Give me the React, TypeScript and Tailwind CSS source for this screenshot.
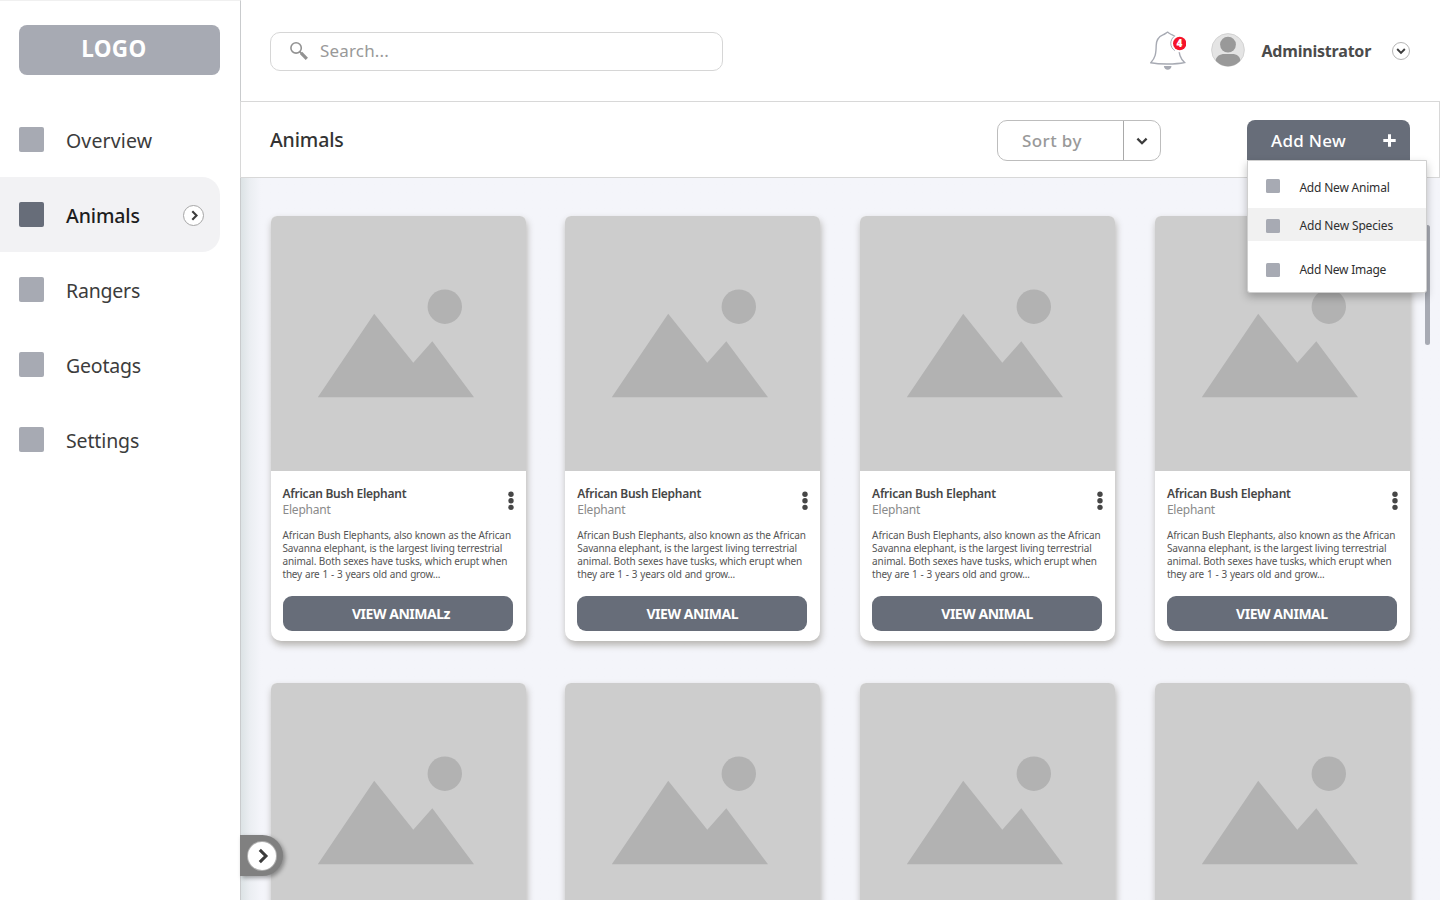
import React from "react";

const NAV = [
  { label: "Overview", tracking: "tracking-[0.13px]" },
  { label: "Animals", tracking: "tracking-[-0.12px]" },
  { label: "Rangers", tracking: "tracking-[-0.2px]" },
  { label: "Geotags", tracking: "tracking-[-0.2px]" },
  { label: "Settings", tracking: "tracking-[-0.13px]" },
];

const DESCRIPTION = [
  { text: "African Bush Elephants, also known as the African", tracking: "tracking-[-0.1px]" },
  { text: "Savanna elephant, is the largest living terrestrial", tracking: "tracking-[-0.13px]" },
  { text: "animal. Both sexes have tusks, which erupt when", tracking: "tracking-[-0.11px]" },
  { text: "they are 1 - 3 years old and grow...", tracking: "tracking-[-0.21px] [word-spacing:0.6px]" },
];

function Chevron({ className }: { className: string }) {
  return (
    <svg viewBox="0 0 12 12" className={className} fill="none" stroke="currentColor" strokeWidth="2.3">
      <path d="M1.4 3.6 6 8.2 10.6 3.6" />
    </svg>
  );
}

function Sidebar() {
  return (
    <aside className="z-10 flex h-full w-[241px] shrink-0 flex-col border-t border-r border-t-[#f0f0f0] border-r-[#c9cbcd] bg-white">
      <div className="mt-6 ml-[19.4px] flex h-[50px] w-[201px] items-center justify-center rounded-lg bg-[#a7aab3] pr-3 pb-0.5 text-[22.5px] font-bold tracking-[0.3px] text-white">
        LOGO
      </div>
      <nav className="mt-[27px] flex flex-col">
        {NAV.map(({ label, tracking }) => {
          const active = label === "Animals";
          return (
            <div
              key={label}
              className={`flex h-[75px] w-[220px] items-center rounded-r-[18px] pl-[19.4px] ${active ? "bg-[#f2f2f4]" : ""}`}
            >
              <span className={`size-[25px] rounded-[2px] ${active ? "bg-[#676d79]" : "bg-[#a7aab3]"}`} />
              <span
                className={`ml-[21.6px] pt-0.5 text-[19.5px] ${tracking} ${active ? "font-medium text-[#1d1d1d]" : "text-[#3c3c3c]"}`}
              >
                {label}
              </span>
              {active && (
                <span className="mt-px mr-4 ml-auto flex size-[21px] items-center justify-center rounded-full border border-[#a6a6a6] bg-white text-[#3c3c3c]">
                  <Chevron className="ml-px size-[11px] -rotate-90" />
                </span>
              )}
            </div>
          );
        })}
      </nav>
    </aside>
  );
}

function Header() {
  return (
    <header className="flex h-[101px] shrink-0 items-center pl-[28.600px]">
      <div className="mt-px flex h-[39px] w-[453px] items-center rounded-[10px] border border-[#d6d6d6] pb-px pl-[18.400px]">
        <svg viewBox="0 0 20 20" className="size-5 text-[#929292]" fill="none" stroke="currentColor">
          <circle cx="7.100" cy="6.9" r="5.200" strokeWidth="1.600" />
          <path d="m10.700 10.600 2 2" strokeWidth="1.800" />
          <path d="m12 11.900 5.800 6" strokeWidth="3.200" />
        </svg>
        <span className="ml-[11px] text-[17px] tracking-[0.18px] text-[#999]">Search...</span>
      </div>
      <div className="relative ml-[427.400px] flex">
        <svg viewBox="0 0 36 40" className="h-10 w-9" fill="none">
          <path
            d="M17.5 1.200c-1.400.8-2.800 2-4.600 2.700C8.500 5.800 6.300 9.500 6.200 14.500c-.2 8.500-.8 12-5.400 17.300 9 1.700 24.500 1.700 33.800-.3-4.600-4.500-5.600-8-5.700-17C28.800 9.200 26.500 5.700 22.300 3.900 20.400 3.100 18.900 2 17.500 1.200Z"
            stroke="#a7aab3"
            strokeWidth="1.4"
          />
          <circle cx="29.700" cy="12.500" r="8.700" fill="#fff" />
          <path d="M24 5.600a8.600 8.600 0 0 0 .8 14" stroke="#a7aab3" strokeWidth="1" />
          <circle cx="29.700" cy="12.500" r="6.700" fill="#f5142b" />
          <path d="M13.900 35h7.600c-.4 2.600-1.600 3.700-3.800 3.700S14.300 37.500 13.900 35Z" fill="#a7aab3" />
        </svg>
        <span className="absolute top-[6px] left-[23px] flex size-[13px] items-center justify-center text-[10px] leading-none font-black text-white">
          4
        </span>
      </div>
      <svg viewBox="0 0 34 34" className="-mt-0.5 ml-[25.500px] size-[34px]">
        <clipPath id="avatar">
          <circle cx="17" cy="17" r="16.2" />
        </clipPath>
        <circle cx="17" cy="17" r="16.400" fill="#e4e4e4" stroke="#cbcbcb" strokeWidth=".8" />
        <g clipPath="url(#avatar)" fill="#999">
          <circle cx="17" cy="11.600" r="7.900" />
          <path d="M4.500 34V29c0-5.800 4.500-8 9-8h7.500c5 0 8.500 2.500 8.500 8v5Z" />
        </g>
      </svg>
      <span className="ml-4 w-[110px] text-[16px] font-bold tracking-[-0.2px] whitespace-nowrap text-[#4b4b4b]">Administrator</span>
      <span className="ml-[20.500px] flex size-[18px] items-center justify-center rounded-full border border-[#b5b5b5] text-[#3c3c3c]">
        <Chevron className="size-[10px]" />
      </span>
    </header>
  );
}

function AddMenu() {
  return (
    <div className="absolute top-10 left-0 flex h-[133px] w-[180px] flex-col rounded-b-[3px] border border-[#cfcfcf] bg-white text-[12px] text-[#2f2f2f] shadow-[0_4px_8px_rgba(0,0,0,0.25)]">
      <div className="flex h-[47px] items-center pt-1 pl-[18.400px]">
        <span className="size-[14px] rounded-[1.5px] bg-[#a7aab3]" />
        <span className="ml-[19px] pt-[3px] tracking-[-0.2px]">Add New Animal</span>
      </div>
      <div className="flex h-[33px] items-center bg-[#f1f1f1] pt-[3px] pl-[18.400px]">
        <span className="size-[14px] rounded-[1.5px] bg-[#a7aab3]" />
        <span className="ml-[19px] pt-px tracking-[-0.15px]">Add New Species</span>
      </div>
      <div className="flex h-[51px] items-center pt-[7px] pl-[18.400px]">
        <span className="size-[14px] rounded-[1.5px] bg-[#a7aab3]" />
        <span className="ml-[19px] tracking-[-0.25px]">Add New Image</span>
      </div>
    </div>
  );
}

function Toolbar() {
  return (
    <div className="relative z-20 -ml-px flex h-[77px] shrink-0 items-center border border-[#d8d8d8] bg-white pl-[29px]">
      <h1 className="w-[727px] pt-px text-[19.500px] font-medium tracking-[-0.15px] text-[#333]">Animals</h1>
      <div className="mt-px flex h-[41px] w-[164px] rounded-[10px] border border-[#bdbdbd]">
        <span className="flex w-[125px] items-center pt-px pl-[24px] text-[17px] font-medium tracking-[0.4px] text-[#999]">Sort by</span>
        <span className="flex flex-1 items-center justify-center border-l border-[#a9a9a9] pt-0.5 text-[#3c3c3c]">
          <Chevron className="size-3" />
        </span>
      </div>
      <div className="relative ml-[86px] h-10 w-[163px]">
        <button className="flex h-10 w-full items-center rounded-t-[8px] bg-[#676d79] pt-0.5 pr-[14px] pl-6 text-[17px] font-medium tracking-[0.3px] text-white">
          Add New
          <svg viewBox="0 0 13 13" className="ml-auto size-[13px]" stroke="white" strokeWidth="3">
            <path d="M6.500 .3v12.400M.3 6.500h12.400" />
          </svg>
        </button>
        <AddMenu />
      </div>
    </div>
  );
}

function Picture() {
  return (
    <svg viewBox="0 0 255 255" className="block size-[255px] bg-[#cdcdcd]" fill="#b2b2b2">
      <circle cx="173.800" cy="90.700" r="17.200" />
      <path d="M46.800 181.300 103.200 97.700 142.300 146.700 161.300 125.200 203 181.300Z" />
    </svg>
  );
}

function CardBody({ action }: { action: string }) {
  return (
    <div className="flex flex-col px-3 pt-[15px]">
      <div className="flex justify-between">
        <div className="flex flex-col leading-4">
          <span className="text-[12px] font-semibold tracking-[-0.25px] text-[#464646]">African Bush Elephant</span>
          <span className="text-[12px] tracking-[-0.22px] text-[#8a8a8a]">Elephant</span>
        </div>
        <svg viewBox="0 0 6 20" className="mt-[5px] h-5 w-1.5" fill="#464646">
          <circle cx="3" cy="3.200" r="2.700" />
          <circle cx="3" cy="9.800" r="2.700" />
          <circle cx="3" cy="16.400" r="2.700" />
        </svg>
      </div>
      <div className="mt-[11px] flex flex-col text-[10px] leading-[13px] whitespace-nowrap text-[#555]">
        {DESCRIPTION.map(({ text, tracking }) => (
          <span key={text} className={tracking}>
            {text}
          </span>
        ))}
      </div>
      <button
        className={`mt-[15px] h-[35px] w-[230px] rounded-[9px] bg-[#676d79] text-[14px] font-bold tracking-[-0.47px] text-white ${action.endsWith("z") ? "pl-[7px]" : ""}`}
      >
        {action}
      </button>
    </div>
  );
}

function Card({ action }: { action?: string }) {
  return (
    <article className="h-[425px] w-[255px] overflow-hidden rounded-t-[6px] rounded-b-[10px] bg-white shadow-[1px_4px_7px_rgba(60,50,30,0.34)]">
      <Picture />
      {action && <CardBody action={action} />}
    </article>
  );
}

const ACTIONS = ["VIEW ANIMALz", "VIEW ANIMAL", "VIEW ANIMAL", "VIEW ANIMAL", undefined, undefined, undefined, undefined];

export default function App() {
  return (
    <div className="flex h-[900px] w-[1440px] overflow-hidden bg-white font-['Noto_Sans',sans-serif]">
      <Sidebar />
      <main className="relative flex min-w-0 flex-1 flex-col">
        <Header />
        <Toolbar />
        <section className="relative min-h-0 flex-1 overflow-hidden bg-[#f4f5fa]">
          <div className="h-full bg-linear-to-r from-[#dce3e5] via-[#ebeef2] via-[9px] to-[#f4f5fa] to-[20px]">
            <div className="grid grid-cols-[255px_255px_255px_255px] gap-x-[39.800px] gap-y-[42px] pt-[38px] pl-[29.500px]">
              {ACTIONS.map((action, i) => (
                <Card key={i} action={action} />
              ))}
            </div>
          </div>
          <span className="absolute top-[47px] left-[1183.500px] h-[120px] w-[5px] rounded-full bg-[#a7aab3]" />
        </section>
        <div className="absolute top-[835px] left-[-1px] z-20 flex h-[41px] w-[43px] items-center rounded-r-full bg-[#808080] pl-[8px] shadow-[2px_2px_4px_rgba(0,0,0,0.35)]">
          <span className="flex size-[28px] items-center justify-center rounded-full bg-white text-[#3c3c3c] ring-1 ring-[#b0b0b0]">
            <Chevron className="ml-0.5 size-4 -rotate-90" />
          </span>
        </div>
      </main>
    </div>
  );
}
